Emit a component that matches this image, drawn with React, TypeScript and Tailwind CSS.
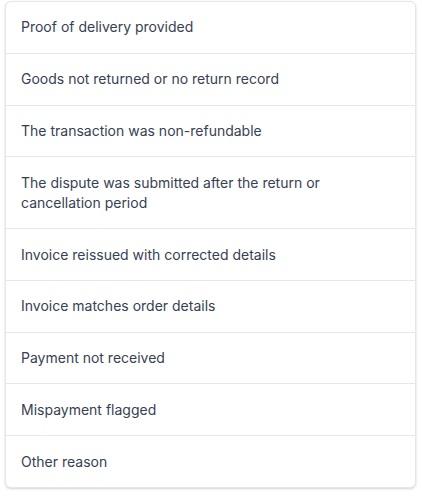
const reasons = [
  "Proof of delivery provided",
  "Goods not returned or no return record",
  "The transaction was non-refundable",
  "The dispute was submitted after the return or cancellation period",
  "Invoice reissued with corrected details",
  "Invoice matches order details",
  "Payment not received",
  "Mispayment flagged",
  "Other reason",
]

export default function App() {
  return (
    <div className="min-h-[498px] bg-white px-[5px] pt-[1px] font-['Inter',sans-serif]">
      <ul className="w-[411px] divide-y divide-gray-200 rounded-md border border-gray-200 bg-white shadow-[0_1px_3px_rgba(16,24,40,0.12),0_1px_2px_rgba(16,24,40,0.06)]">
        {reasons.map((r) => (
          <li key={r} className="px-[15px] py-[15.4px] pr-10 text-sm leading-5 text-gray-700">
            {r}
          </li>
        ))}
      </ul>
    </div>
  )
}
